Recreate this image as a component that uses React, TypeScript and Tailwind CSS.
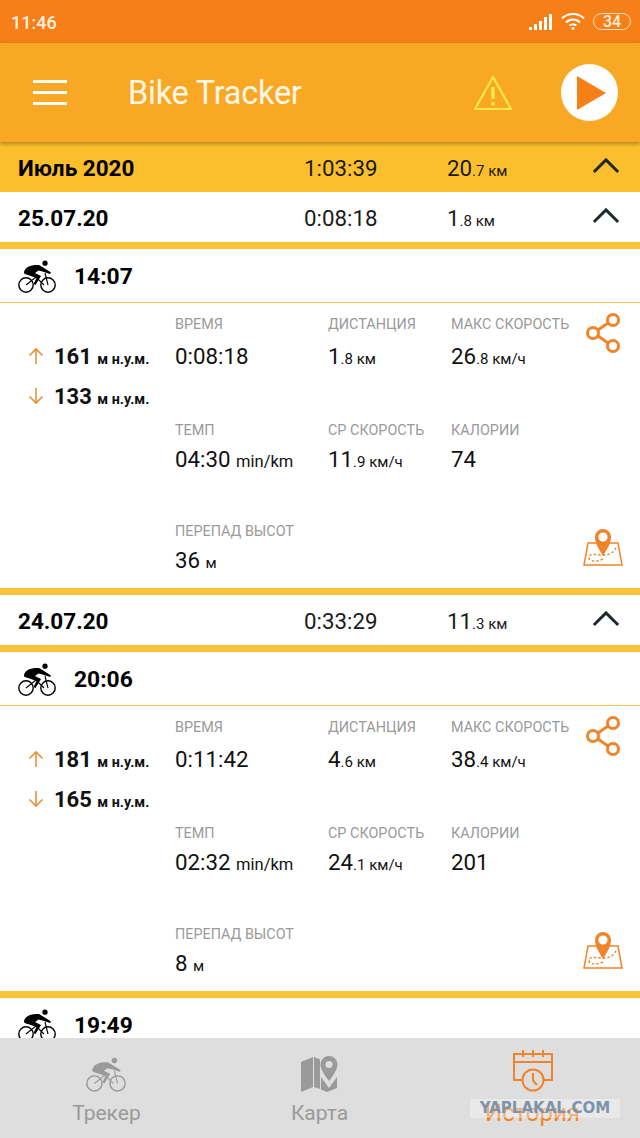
import { ReactNode } from 'react'

const ORANGE = '#f0842a'

function Cyclist({ color = '#000', className }: { color?: string; className?: string }) {
  return (
    <svg viewBox="0 0 39 33" className={className} fill="none">
      <circle cx="8" cy="25" r="7.2" stroke={color} strokeWidth="1.4" />
      <circle cx="30" cy="25" r="7.2" stroke={color} strokeWidth="1.4" />
      <circle cx="27" cy="3.2" r="2.6" fill={color} />
      <path d="M8 25 L18 17 L26 25 M30 25 L27 13" stroke={color} strokeWidth="1.1" />
      <path d="M6 12 C7 7 13 4.5 21 5 L26 8 L33 12.5 L32 14 L24.5 11.5 L20.5 10.5 L17 13 L23 16 L17.5 25 L15.5 24 L18.5 18 L10 15 C8 14.5 5.5 14 6 12 Z" fill={color} />
    </svg>
  )
}

function ShareIcon() {
  return (
    <svg viewBox="0 0 36 40" className="w-9 h-10" fill="none" stroke={ORANGE} strokeWidth="3">
      <circle cx="27" cy="7" r="5.5" />
      <circle cx="7" cy="20" r="5.5" />
      <circle cx="27" cy="33" r="5.5" />
      <path d="M12 17 L22 10 M12 23 L22 30" />
    </svg>
  )
}

function MapPinIcon() {
  return (
    <svg viewBox="0 0 40 40" className="w-10 h-10" fill="none">
      <path d="M5 15 H35 L39 37 H1 Z" fill="#fff" stroke={ORANGE} strokeWidth="1.5" />
      <path d="M20 31 C14 34 7 34 6 30 C5 26 11 26 17 27 C24 28 32 25 33 19" stroke={ORANGE} strokeWidth="1.4" strokeDasharray="2.5 2" />
      <path d="M20 28 C16 21 12 16 12 9 A8 8 0 0 1 28 9 C28 16 24 21 20 28 Z" fill={ORANGE} />
      <circle cx="20" cy="9" r="4.6" fill="#fff" />
    </svg>
  )
}

function Arrow({ down }: { down?: boolean }) {
  return (
    <svg viewBox="0 0 16 18" className="w-4 h-[18px]" fill="none" stroke="#e8903c" strokeWidth="1.6">
      {down ? <path d="M8 1 V16 M1.5 9.5 L8 16 L14.5 9.5" /> : <path d="M8 17 V2 M1.5 8.5 L8 2 L14.5 8.5" />}
    </svg>
  )
}

function Chevron() {
  return (
    <svg viewBox="0 0 30 18" className="w-[28px] h-[17px] mb-[4px]" fill="none" stroke="#1f2a2e" strokeWidth="3.2">
      <path d="M2 16 L15 3 L28 16" />
    </svg>
  )
}

function Unit({ children }: { children: ReactNode }) {
  return <span className="text-[15px]">{children}</span>
}

function Metric({ label, valueGap, children }: { label: string; valueGap: string; children: ReactNode }) {
  return (
    <div>
      <div className="text-[14.4px] leading-[17px] text-[#9a9a9a] whitespace-nowrap">{label}</div>
      <div className={`${valueGap} text-[22.3px] leading-[26px] text-[#111] whitespace-nowrap`}>{children}</div>
    </div>
  )
}

function SummaryRow({ title, time, km, dec, month }: { title: string; time: string; km: string; dec: string; month?: boolean }) {
  return (
    <div className={`flex items-center h-[50px] pl-[18px] shrink-0 ${month ? 'bg-[#fbbf2d]' : 'bg-white'}`}>
      <div className="w-[286px] pt-[3px] text-[22.5px] font-bold text-black">{title}</div>
      <div className="w-[143px] pt-[3px] text-[22.3px] text-[#1a1a1a]">{time}</div>
      <div className="w-[145px] pt-[3px] text-[22.3px] text-[#1a1a1a] whitespace-nowrap">
        {km}
        <Unit>{dec} км</Unit>
      </div>
      <Chevron />
    </div>
  )
}

function RideHeader({ time }: { time: string }) {
  return (
    <div className="flex items-center gap-[17px] h-[53px] pl-[18px] shrink-0 bg-white">
      <Cyclist className="w-[39px] h-[33px] mt-[2px]" />
      <span className="pt-[4px] text-[22.8px] font-bold text-black">{time}</span>
    </div>
  )
}

type Ride = {
  time: string
  up: string
  down: string
  duration: string
  km: string
  kmDec: string
  max: string
  maxDec: string
  pace: string
  avg: string
  avgDec: string
  cal: string
  diff: string
}

function Altitude({ value, down }: { value: string; down?: boolean }) {
  return (
    <div className="flex items-center gap-[10px] h-[40px]">
      <Arrow down={down} />
      <span className="text-[22px] font-bold text-[#111] whitespace-nowrap">
        {value} <span className="text-[14.3px]">м н.у.м.</span>
      </span>
    </div>
  )
}

function RideCard({ ride }: { ride: Ride }) {
  return (
    <div className="shrink-0">
      <RideHeader time={ride.time} />
      <div className="h-[286px] bg-white border-t border-[#f6c64e] flex pt-[13px]">
        <div className="w-[175px] pl-[28px] pt-[20px] shrink-0">
          <Altitude value={ride.up} />
          <Altitude value={ride.down} down />
        </div>
        <div className="flex-1 grid grid-cols-[153px_123px_1fr] grid-rows-[106px_101px_auto] relative">
          <Metric label="ВРЕМЯ" valueGap="mt-[10px]">{ride.duration}</Metric>
          <Metric label="ДИСТАНЦИЯ" valueGap="mt-[10px]">
            {ride.km}
            <Unit>{ride.kmDec} км</Unit>
          </Metric>
          <Metric label="МАКС СКОРОСТЬ" valueGap="mt-[10px]">
            {ride.max}
            <Unit>{ride.maxDec} км/ч</Unit>
          </Metric>
          <Metric label="ТЕМП" valueGap="mt-[7px]">
            {ride.pace} <span className="text-[16.5px]">min/km</span>
          </Metric>
          <Metric label="СР СКОРОСТЬ" valueGap="mt-[7px]">
            {ride.avg}
            <Unit>{ride.avgDec} км/ч</Unit>
          </Metric>
          <Metric label="КАЛОРИИ" valueGap="mt-[7px]">{ride.cal}</Metric>
          <Metric label="ПЕРЕПАД ВЫСОТ" valueGap="mt-[7px]">
            {ride.diff} <Unit>м</Unit>
          </Metric>
          <div className="absolute right-[18px] top-[-3px]">
            <ShareIcon />
          </div>
          <div className="absolute right-[17px] top-[212px]">
            <MapPinIcon />
          </div>
        </div>
      </div>
    </div>
  )
}

function Bar() {
  return <div className="h-[7px] bg-[#fac139] shrink-0" />
}

function NavItem({ label, icon, active }: { label: string; icon: ReactNode; active?: boolean }) {
  return (
    <div className="flex flex-col items-center w-[213px]">
      <div className="h-[54px] flex items-end justify-center">{icon}</div>
      <div className={`leading-[24px] mt-[9px] ${active ? 'text-[24px] text-[#f0842a]' : 'text-[21px] text-[#9a9a9a]'}`}>{label}</div>
    </div>
  )
}

const rides: Ride[] = [
  { time: '14:07', up: '161', down: '133', duration: '0:08:18', km: '1', kmDec: '.8', max: '26', maxDec: '.8', pace: '04:30', avg: '11', avgDec: '.9', cal: '74', diff: '36' },
  { time: '20:06', up: '181', down: '165', duration: '0:11:42', km: '4', kmDec: '.6', max: '38', maxDec: '.4', pace: '02:32', avg: '24', avgDec: '.1', cal: '201', diff: '8' },
]

export default function App() {
  return (
    <div className="relative w-[640px] h-[1138px] flex flex-col overflow-hidden bg-white font-['Roboto',sans-serif]">
      {/* status bar */}
      <div className="h-[43px] shrink-0 bg-[#f67f17] flex items-center pl-[11px] pr-[9px] text-white">
        <span className="pt-[1px] text-[18px] font-medium text-[#fdf0e0]">11:46</span>
        <div className="ml-auto flex items-center gap-[8px]">
          <svg viewBox="0 0 24 18" className="w-[24px] h-[18px]" fill="#fff">
            <rect x="0" y="14" width="3" height="3" />
            <rect x="5" y="11" width="3" height="6" />
            <rect x="10" y="8" width="3" height="9" />
            <rect x="15" y="4" width="3" height="13" />
            <rect x="20" y="1" width="3" height="16" />
          </svg>
          <svg viewBox="0 0 24 18" className="w-[24px] h-[19px]" fill="none" stroke="#fff" strokeWidth="2">
            <path d="M1 6 C7 0 17 0 23 6" />
            <path d="M5 10 C9 6 15 6 19 10" />
            <path d="M8.5 13 C10.5 11.5 13.5 11.5 15.5 13" />
            <circle cx="12" cy="16" r="1.4" fill="#fff" stroke="none" />
          </svg>
          <div className="w-[38px] h-[17px] rounded-full border-[1.5px] border-[#fde3c4] flex items-center justify-center text-[16px] font-medium leading-none text-[#fdf0e0]">
            34
          </div>
        </div>
      </div>

      {/* app bar */}
      <div className="h-[99px] shrink-0 bg-[#f9a825] flex items-center shadow-[0_2px_4px_rgba(0,0,0,0.3)] z-10">
        <div className="ml-[33px] w-[34px] flex flex-col gap-[8px]">
          <div className="h-[3px] bg-white" />
          <div className="h-[3px] bg-white" />
          <div className="h-[3px] bg-white" />
        </div>
        <div className="ml-[61px] pt-[2px] w-[172px] text-[32.4px] text-[#fff6e6] tracking-[-0.2px] whitespace-nowrap">Bike Tracker</div>
        <svg viewBox="0 0 40 36" className="ml-[173px] w-[40px] h-[36px]" fill="none" stroke="#fde64f" strokeWidth="2.2">
          <path d="M20 2 L38 34 H2 Z" strokeLinejoin="round" />
          <path d="M20 12 V24" strokeWidth="3.5" />
          <path d="M20 27 V30.5" strokeWidth="3.5" />
        </svg>
        <div className="ml-[48px] w-[57px] h-[57px] rounded-full bg-white flex items-center justify-center">
          <svg viewBox="0 0 30 34" className="w-[30px] h-[34px] ml-[4px]" fill="#f67f17">
            <path d="M0 0 L29 17 L0 34 Z" />
          </svg>
        </div>
      </div>

      {/* list */}
      <div className="flex-1 min-h-0 overflow-hidden flex flex-col">
        <SummaryRow month title="Июль 2020" time="1:03:39" km="20" dec=".7" />
        <SummaryRow title="25.07.20" time="0:08:18" km="1" dec=".8" />
        <Bar />
        <RideCard ride={rides[0]} />
        <Bar />
        <SummaryRow title="24.07.20" time="0:33:29" km="11" dec=".3" />
        <Bar />
        <RideCard ride={rides[1]} />
        <Bar />
        <RideHeader time="19:49" />
      </div>

      {/* bottom nav */}
      <div className="h-[100px] shrink-0 bg-[#dedede] flex">
        <NavItem
          label="Трекер"
          icon={<Cyclist color="#9a9a9a" className="w-[41px] h-[35px]" />}
        />
        <NavItem
          label="Карта"
          icon={
            <svg viewBox="0 0 37 36" className="w-[37px] h-[36px]" fill="#9a9a9a">
              <path d="M0 6 L12 1 V31 L0 36 Z" />
              <path d="M13 1 L19 3.5 V33 L13 31 Z" />
              <path d="M20 21 L28 32 L36 21 V32 L26 36 L20 33.5 Z" />
              <path fillRule="evenodd" d="M28 0 A8.5 8.5 0 0 1 36.5 8.5 C36.5 13 32 20 28 25 C24 20 19.5 13 19.5 8.5 A8.5 8.5 0 0 1 28 0 Z M28 5 A3.5 3.5 0 1 0 28 12 A3.5 3.5 0 1 0 28 5 Z" />
            </svg>
          }
        />
        <NavItem
          active
          label="История"
          icon={
            <svg viewBox="0 0 40 43" className="w-[40px] h-[43px]" fill="none" stroke="#f0842a" strokeWidth="2">
              <path d="M1 31 V5 H39 V31 Z" />
              <path d="M1 13 H39" />
              <path d="M10 1 V8 M20 1 V8 M30 1 V8" />
              <circle cx="20" cy="31" r="10.5" fill="#dedede" />
              <path d="M20 24 V31.5 L24 36" />
            </svg>
          }
        />
      </div>

      {/* watermark */}
      <div className="absolute left-[470px] top-[1099px] w-[150px] h-[19px] bg-white/35 flex items-center justify-center text-[15px] leading-none font-bold font-['DejaVu_Sans',sans-serif] text-[#7d93ad] whitespace-nowrap">
        YAPLAKAL.COM
      </div>
    </div>
  )
}
